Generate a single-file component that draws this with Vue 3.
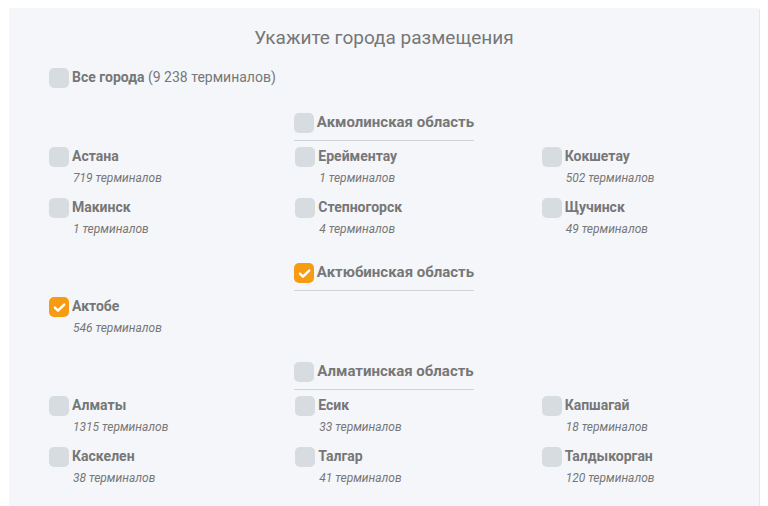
<script setup>
import { reactive, ref } from 'vue'

const allCities = ref(false)

const regions = reactive([
  {
    id: 'akmola',
    name: 'Акмолинская область',
    checked: false,
    cities: [
      { id: 'astana', name: 'Астана', terminals: 719, checked: false },
      { id: 'ereymentau', name: 'Ерейментау', terminals: 1, checked: false },
      { id: 'kokshetau', name: 'Кокшетау', terminals: 502, checked: false },
      { id: 'makinsk', name: 'Макинск', terminals: 1, checked: false },
      { id: 'stepnogorsk', name: 'Степногорск', terminals: 4, checked: false },
      { id: 'schuchinsk', name: 'Щучинск', terminals: 49, checked: false }
    ]
  },
  {
    id: 'aktobe-region',
    name: 'Актюбинская область',
    checked: true,
    cities: [{ id: 'aktobe', name: 'Актобе', terminals: 546, checked: true }]
  },
  {
    id: 'almaty-region',
    name: 'Алматинская область',
    checked: false,
    cities: [
      { id: 'almaty', name: 'Алматы', terminals: 1315, checked: false },
      { id: 'esik', name: 'Есик', terminals: 33, checked: false },
      { id: 'kapshagay', name: 'Капшагай', terminals: 18, checked: false },
      { id: 'kaskelen', name: 'Каскелен', terminals: 38, checked: false },
      { id: 'talgar', name: 'Талгар', terminals: 41, checked: false },
      { id: 'taldykorgan', name: 'Талдыкорган', terminals: 120, checked: false }
    ]
  }
])

function toggleRegion(region) {
  region.cities.forEach((city) => {
    city.checked = region.checked
  })
}

function toggleAll() {
  regions.forEach((region) => {
    region.checked = allCities.value
    toggleRegion(region)
  })
}
</script>

<template>
  <main class="panel">
    <h1 class="title">Укажите города размещения</h1>

    <div class="option">
      <span class="tick">
        <input id="all" v-model="allCities" type="checkbox" @change="toggleAll" />
        <svg viewBox="0 0 20 20" aria-hidden="true"><path d="M5.9 10.6L9 13.7L15.2 7.6" /></svg>
      </span>
      <label for="all"><b>Все города</b> (9 238 терминалов)</label>
    </div>

    <section v-for="region in regions" :key="region.id" class="region">
      <h2 class="region-head">
        <span class="tick">
          <input :id="region.id" v-model="region.checked" type="checkbox" @change="toggleRegion(region)" />
          <svg viewBox="0 0 20 20" aria-hidden="true"><path d="M5.9 10.6L9 13.7L15.2 7.6" /></svg>
        </span>
        <label :for="region.id">{{ region.name }}</label>
      </h2>
      <ul class="cities">
        <li v-for="city in region.cities" :key="city.id" class="option">
          <span class="tick">
            <input :id="city.id" v-model="city.checked" type="checkbox" />
            <svg viewBox="0 0 20 20" aria-hidden="true"><path d="M5.9 10.6L9 13.7L15.2 7.6" /></svg>
          </span>
          <label :for="city.id">
            <b>{{ city.name }}</b>
            <em>{{ city.terminals }} терминалов</em>
          </label>
        </li>
      </ul>
    </section>
  </main>
</template>

<style>
body {
  margin: 0;
  background: #fff;
}
</style>

<style scoped>
.panel {
  margin: 8px 9px 0;
  padding: 0 40px 8px;
  background: #f4f6fa;
  box-shadow: 1px 1px 0 #e6e7e9;
  color: #777;
  font: 14px/18px Roboto, sans-serif;
}

.title {
  margin: 0;
  font-size: 19px;
  font-weight: 400;
  line-height: 60px;
  text-align: center;
}

.option {
  display: flex;
  gap: 3px;
}

.tick {
  position: relative;
  flex: none;
  width: 20px;
  height: 20px;
}

.tick input {
  display: block;
  appearance: none;
  width: 20px;
  height: 20px;
  margin: 0;
  border-radius: 5px;
  background: #d6dcdf;
  cursor: pointer;
}

.tick input:checked {
  background: #f59c12;
}

.tick svg {
  position: absolute;
  inset: 0;
  display: none;
  fill: none;
  stroke: #fff;
  stroke-width: 2.4;
  stroke-linecap: round;
  stroke-linejoin: round;
  pointer-events: none;
}

.tick input:checked + svg {
  display: block;
}

label {
  cursor: pointer;
}

b {
  font-weight: 700;
}

.region {
  margin-top: 14px;
}

.option + .region {
  margin-top: 25px;
}

.region-head {
  display: flex;
  gap: 3px;
  width: fit-content;
  margin: 0 auto 6px;
  padding-bottom: 7px;
  border-bottom: 1px solid #d0d2d5;
  font-size: 15px;
  font-weight: 700;
}

.cities {
  display: grid;
  grid-template-columns: repeat(3, minmax(0, 1fr));
  grid-auto-rows: 51px;
  column-gap: 69px;
  margin: 0;
  padding: 0;
  list-style: none;
}

.cities b,
.cities em {
  display: block;
}

.cities em {
  padding: 4px 0 0 1px;
  font-size: 12px;
}
</style>
